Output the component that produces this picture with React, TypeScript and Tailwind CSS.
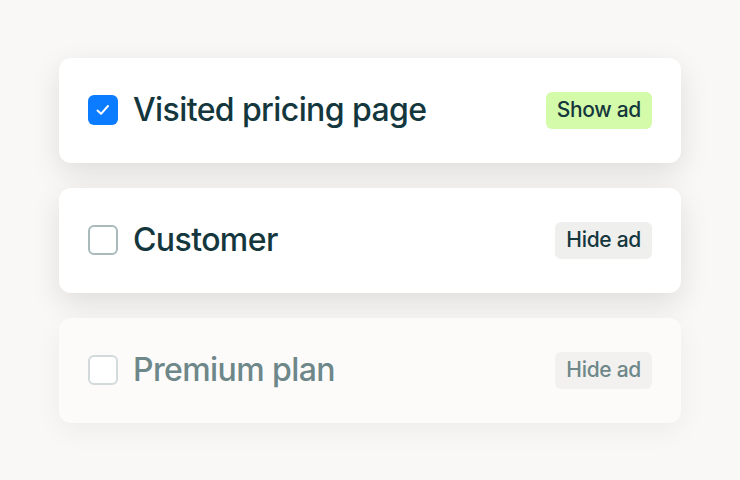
import React from "react";

function Check({ checked, faded }: { checked?: boolean; faded?: boolean }) {
  if (checked) {
    return (
      <div className="w-[30px] h-[30px] rounded-[6px] bg-[#0b7bff] flex items-center justify-center shrink-0">
        <svg width="18" height="18" viewBox="0 0 18 18" fill="none">
          <path d="M3.5 9.6 L7 12.8 L14 5" stroke="white" strokeWidth="2" strokeLinecap="round" strokeLinejoin="round" />
        </svg>
      </div>
    );
  }
  return (
    <div
      className={
        "w-[30px] h-[30px] rounded-[6px] border-2 bg-white shrink-0 " +
        (faded ? "border-[#d3dadb]" : "border-[#a9b9bc]")
      }
    />
  );
}

function Row({
  label,
  button,
  checked,
  faded,
  show,
}: {
  label: string;
  button: string;
  checked?: boolean;
  faded?: boolean;
  show?: boolean;
}) {
  return (
    <div
      className={
        "h-[105px] rounded-[12px] flex items-center pl-[29px] pr-[29px] " +
        (faded
          ? "bg-[#fcfbfa] shadow-[0_8px_28px_rgba(0,0,0,0.05)]"
          : "bg-white shadow-[0_10px_30px_rgba(0,0,0,0.11)]")
      }
    >
      <Check checked={checked} faded={faded} />
      <div
        className={
          "ml-[15px] flex-1 text-[32px] font-medium tracking-[-0.6px] leading-none " +
          (faded ? "text-[#6e8789]" : "text-[#14373d]")
        }
      >
        {label}
      </div>
      <div
        className={
          "h-[37px] rounded-[6px] px-[11px] flex items-center text-[21px] font-medium tracking-[-0.3px] " +
          (show
            ? "bg-[#d4fba9] text-[#14373d]"
            : faded
            ? "bg-[#f2f1ef] text-[#6e8789]"
            : "bg-[#efefed] text-[#14373d]")
        }
      >
        {button}
      </div>
    </div>
  );
}

export default function App() {
  return (
    <div
      className="w-[740px] h-[480px] bg-[#f9f8f6] flex flex-col justify-center px-[59px] gap-[25px]"
      style={{ fontFamily: "Inter, 'Noto Sans', sans-serif" }}
    >
      <Row label="Visited pricing page" button="Show ad" checked show />
      <Row label="Customer" button="Hide ad" />
      <Row label="Premium plan" button="Hide ad" faded />
    </div>
  );
}
